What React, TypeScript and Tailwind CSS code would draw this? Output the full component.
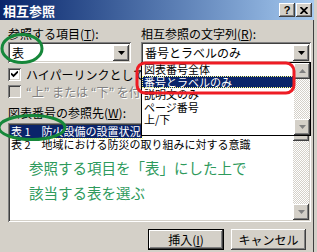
import React from 'react';

const sunken =
  'shadow-[inset_1px_1px_0_#808080,inset_-1px_-1px_0_#ffffff,inset_2px_2px_0_#404040,inset_-2px_-2px_0_#d4d0c8]';
const raised =
  'shadow-[inset_-1px_-1px_0_#404040,inset_1px_1px_0_#ffffff,inset_-2px_-2px_0_#808080,inset_2px_2px_0_#d4d0c8]';
const hatch = 'bg-[repeating-conic-gradient(#d4d0c8_0_25%,#ffffff_0_50%)] bg-[length:2px_2px]';

const Arrow: React.FC<{ up?: boolean; gray?: boolean }> = ({ up, gray }) => (
  <svg width="7" height="4" viewBox="0 0 7 4">
    <path d={up ? 'M3.5 0 L7 4 L0 4 Z' : 'M0 0 L7 0 L3.5 4 Z'} fill={gray ? '#808080' : '#000'} />
  </svg>
);

const ArrowBtn: React.FC<{ up?: boolean; gray?: boolean; className?: string }> = ({ up, gray, className }) => (
  <div className={`w-[16px] h-[16px] bg-[#d4d0c8] ${raised} flex items-center justify-center ${className ?? ''}`}>
    <Arrow up={up} gray={gray} />
  </div>
);

const Combo: React.FC<{ value: string }> = ({ value }) => (
  <div className={`h-[21px] bg-white ${sunken} flex items-center pl-[4px] pr-[2px]`}>
    <span className="flex-1 text-[12px] leading-none">{value}</span>
    <ArrowBtn />
  </div>
);

const CheckBox: React.FC<{ checked?: boolean; disabled?: boolean; label: string }> = ({ checked, disabled, label }) => (
  <div className="flex items-center gap-[5px] h-[13px] whitespace-nowrap">
    <div className={`w-[13px] h-[13px] shrink-0 ${disabled ? 'bg-[#d4d0c8]' : 'bg-white'} ${sunken} flex items-center justify-center`}>
      {checked && (
        <svg width="7" height="7" viewBox="0 0 7 7">
          <path d="M0 2.5 L2.5 5 L7 0.5" stroke="#000" strokeWidth="1.8" fill="none" />
        </svg>
      )}
    </div>
    <span className={`text-[12px] leading-none ${disabled ? 'text-[#808080] [text-shadow:1px_1px_0_#fff]' : ''}`}>{label}</span>
  </div>
);

export default function App() {
  const dropItems = ['図表番号全体', '番号とラベルのみ', '説明文のみ', 'ページ番号', '上/下'];

  return (
    <div className="w-[317px] h-[252px] bg-[#d4d0c8] relative overflow-hidden text-black font-['Noto_Sans_CJK_JP',sans-serif] border-r-[3px] border-r-[#d4d0c8] shadow-[inset_-1px_0_0_#404040]">
      {/* title bar */}
      <div className="h-[20px] bg-gradient-to-r from-[#0a246a] to-[#a6caf0] flex items-center pl-[3px] pr-[2px]">
        <span className="flex-1 text-white font-bold text-[13px] leading-none">相互参照</span>
        <div className="flex">
          <div className={`w-[16px] h-[14px] bg-[#d4d0c8] ${raised} flex items-center justify-center text-[11px] font-bold leading-none font-['Liberation_Sans',sans-serif]`}>?</div>
          <div className={`ml-[1px] w-[16px] h-[14px] bg-[#d4d0c8] ${raised} flex items-center justify-center`}>
            <svg width="8" height="7" viewBox="0 0 8 7">
              <path d="M0.5 0 L7.5 7 M7.5 0 L0.5 7" stroke="#000" strokeWidth="1.8" />
            </svg>
          </div>
        </div>
      </div>

      <div className="px-[8px] pt-[8px]">
        <div className="grid grid-cols-[123px_170px] gap-x-[10px]">
          <div className="text-[12px] leading-none h-[14px]">参照する項目(<span className="underline">T</span>):</div>
          <div className="text-[12px] leading-none h-[14px]">相互参照の文字列(<span className="underline">R</span>):</div>
          <Combo value="表" />
          <Combo value="番号とラベルのみ" />
        </div>

        <div className="mt-[5px] flex flex-col gap-[4px]">
          <CheckBox checked label="ハイパーリンクとして挿入する" />
          <CheckBox disabled label="“上” または “下” を付ける" />
        </div>

        <div className="mt-[9px] text-[12px] leading-none h-[14px]">図表番号の参照先(<span className="underline">W</span>):</div>

        <div className={`mt-[2px] w-[303px] h-[99px] bg-white ${sunken} flex p-[2px]`}>
          <div className="flex-1 flex flex-col text-[11px] leading-none whitespace-nowrap overflow-hidden">
            <div className="h-[13px] flex items-center">
              <span className="bg-[#0a246a] text-white h-[13px] px-[1px] outline outline-1 outline-dotted outline-[#ffff80] flex items-center">表 1　防火設備の設置状況</span>
            </div>
            <div className="h-[13px] flex items-center px-[1px]">表 2　地域における防災の取り組みに対する意識</div>
            <div className="mt-[4px] pl-[19px] text-[#2e9a5c] text-[14.5px] leading-[25px]">
              <div>参照する項目を「表」にした上で</div>
              <div>該当する表を選ぶ</div>
            </div>
          </div>
          <div className={`w-[16px] ${hatch} flex flex-col justify-between`}>
            <ArrowBtn up gray />
            <ArrowBtn gray />
          </div>
        </div>

        <div className="mt-[7px] flex justify-end gap-[7px]">
          <div className={`w-[76px] h-[21px] bg-[#d4d0c8] border border-black ${raised} flex items-center justify-center text-[12px] leading-none`}>挿入(<span className="underline">I</span>)</div>
          <div className={`w-[75px] h-[21px] bg-[#d4d0c8] ${raised} flex items-center justify-center text-[12px] leading-none`}>キャンセル</div>
        </div>
      </div>

      {/* opened dropdown list */}
      <div className="absolute left-[141px] top-[62px] w-[170px] h-[74px] bg-white border border-black flex">
        <div className="flex-1 flex flex-col text-[11px] leading-[12px] whitespace-nowrap overflow-hidden">
          {dropItems.map((it, i) => (
            <div
              key={it}
              className={`h-[12.5px] flex items-center pl-[2px] ${i === 1 ? 'bg-[#0a246a] text-white outline outline-1 outline-dotted outline-[#ffff80] -outline-offset-1' : ''}`}
            >
              {it}
            </div>
          ))}
        </div>
        <div className={`w-[16px] ${hatch} flex flex-col justify-between`}>
          <ArrowBtn up gray />
          <ArrowBtn gray />
        </div>
      </div>

      {/* annotation marks */}
      <svg className="absolute left-0 top-0 pointer-events-none" width="317" height="252">
        <ellipse cx="22" cy="48.5" rx="20" ry="14" fill="none" stroke="#16873a" strokeWidth="3" />
        <ellipse cx="32" cy="127.5" rx="33" ry="12" fill="none" stroke="#16873a" strokeWidth="3" />
        <rect x="137" y="63" width="157" height="30" rx="8" fill="none" stroke="#ee1c24" strokeWidth="3" />
      </svg>
    </div>
  );
}
